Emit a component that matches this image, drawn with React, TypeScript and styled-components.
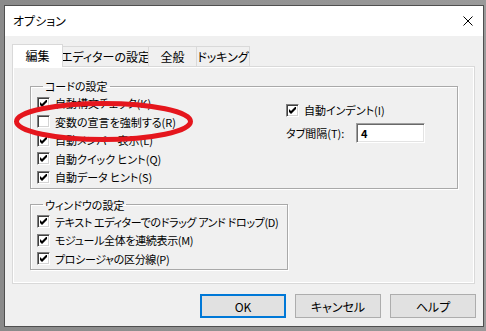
import styled, { createGlobalStyle } from 'styled-components';

const GlobalStyle = createGlobalStyle`
  html, body {
    margin: 0;
    padding: 0;
    background: #969696;
  }
  * {
    box-sizing: border-box;
  }
`

const CheckMark = () => (
  <svg width="7" height="7" viewBox="0 0 7 7">
    <polygon points="0,2 2,4 7,-1 7,2 2,7 0,5" fill="#000" />
  </svg>
)

type Item = { label: string; checked: boolean }

const codeItems: Item[] = [
  { label: '自動構文チェック(K)', checked: true },
  { label: '変数の宣言を強制する(R)', checked: false },
  { label: '自動メンバー表示(L)', checked: true },
  { label: '自動クイック ヒント(Q)', checked: true },
  { label: '自動データ ヒント(S)', checked: true },
]

const windowItems: Item[] = [
  { label: 'テキスト エディターでのドラッグ アンド ドロップ(D)', checked: true },
  { label: 'モジュール全体を連続表示(M)', checked: true },
  { label: 'プロシージャの区分線(P)', checked: true },
]

const tabs = [
  { label: '編集', width: 51 },
  { label: 'エディターの設定', width: 87 },
  { label: '全般', width: 49 },
  { label: 'ドッキング', width: 54 },
]

function CheckRow({ label, checked, tight }: Item & { tight?: boolean }) {
  return (
    <Row>
      <Box>{checked && <CheckMark />}</Box>
      <RowText $tight={tight}>{label}</RowText>
    </Row>
  )
}

function App() {
  return (
    <Page>
      <GlobalStyle />
      <Window>
        <TitleBar>
          <Title>オプション</Title>
          <CloseButton>
            <svg width="10" height="10" viewBox="0 0 10 10">
              <path d="M0.5 0.5 L9.5 9.5 M9.5 0.5 L0.5 9.5" stroke="#000" strokeWidth="1" />
            </svg>
          </CloseButton>
        </TitleBar>

        <Body>
          <TabStrip>
            {tabs.map((t, i) => (
              <Tab key={t.label} $active={i === 0} $width={t.width}>{t.label}</Tab>
            ))}
          </TabStrip>

          <Panel>
            <Group>
              <Legend>コードの設定</Legend>
              <CodeGrid>
                <Column>
                  {codeItems.map(item => <CheckRow key={item.label} {...item} />)}
                </Column>
                <SideColumn>
                  <Row>
                    <Box><CheckMark /></Box>
                    <RowText>自動インデント(I)</RowText>
                  </Row>
                  <FieldRow>
                    <FieldLabel>タブ間隔(T):</FieldLabel>
                    <TextInput>4</TextInput>
                  </FieldRow>
                </SideColumn>
              </CodeGrid>
            </Group>

            <Group $width={258}>
              <Legend>ウィンドウの設定</Legend>
              <Column>
                {windowItems.map(item => <CheckRow key={item.label} {...item} tight />)}
              </Column>
            </Group>
          </Panel>

          <ButtonRow>
            <Button $default>OK</Button>
            <Button>キャンセル</Button>
            <Button>ヘルプ</Button>
          </ButtonRow>
        </Body>
      </Window>

      <Annotation width="486" height="331" viewBox="0 0 486 331">
        <ellipse cx="103.5" cy="121.5" rx="87" ry="18" fill="none" stroke="#e5161d" strokeWidth="5" />
      </Annotation>
    </Page>
  )
}

const Page = styled.div`
  position: relative;
  width: 486px;
  height: 331px;
  padding: 5px 2px 4px 4px;
  background: linear-gradient(90deg, #8a8a8a, #9a9a9a);
  font-family: "Noto Sans CJK JP", "Noto Sans", sans-serif;
  color: #000;
`

const Window = styled.div`
  width: 480px;
  height: 322px;
  border: 1px solid #4f4f4f;
  display: flex;
  flex-direction: column;
  background: #f0f0f0;
`

const TitleBar = styled.div`
  height: 30px;
  background: #fff;
  display: flex;
  align-items: center;
  justify-content: space-between;
  padding-left: 8px;
`

const Title = styled.span`
  font-size: 12px;
  font-feature-settings: "palt";
  line-height: 16px;
`

const CloseButton = styled.div`
  width: 30px;
  height: 30px;
  display: flex;
  align-items: center;
  justify-content: center;
  padding-bottom: 1px;
`

const Body = styled.div`
  flex: 1;
  padding: 8px 7px 0 7px;
  display: flex;
  flex-direction: column;
`

const TabStrip = styled.div`
  height: 22px;
  display: flex;
  align-items: flex-end;
`

const Tab = styled.div<{ $active?: boolean; $width: number }>`
  position: relative;
  width: ${p => p.$width}px;
  height: ${p => (p.$active ? 23 : 20)}px;
  margin-bottom: ${p => (p.$active ? -1 : 0)}px;
  margin-left: -1px;
  z-index: ${p => (p.$active ? 1 : 0)};
  border: 1px solid #d9d9d9;
  border-bottom: none;
  background: ${p => (p.$active ? '#fff' : '#f0f0f0')};
  display: flex;
  align-items: center;
  justify-content: center;
  padding-bottom: ${p => (p.$active ? 1 : 0)}px;
  font-size: 12px;
  font-feature-settings: "palt";
  white-space: nowrap;

  &:first-child {
    margin-left: 0;
  }
`

const Panel = styled.div`
  width: 463px;
  height: 218px;
  border: 1px solid #d9d9d9;
  background: #f0f0f0;
  box-shadow: inset 0 0 0 1px #fff;
  padding: 12px 0 0 17px;
  display: flex;
  flex-direction: column;
  gap: 9px;
`

const Group = styled.fieldset<{ $width?: number }>`
  width: ${p => p.$width ?? 428}px;
  margin: 0;
  padding: 1px 6px 1px 6px;
  min-width: 0;
  border: 1px solid #a9a9a9;
  box-shadow: 1px 1px 0 #fff, inset 1px 1px 0 #fff;
`

const Legend = styled.legend`
  margin-left: 6px;
  padding: 0 2px;
  font-size: 11px;
  font-feature-settings: "palt";
  line-height: 14px;
`

const CodeGrid = styled.div`
  display: grid;
  grid-template-columns: 249px 1fr;
`

const Column = styled.div`
  display: flex;
  flex-direction: column;
`

const SideColumn = styled.div`
  display: flex;
  flex-direction: column;
  padding-top: 7px;
  gap: 3px;
`

const Row = styled.div`
  height: 18.5px;
  display: flex;
  align-items: center;
  gap: 5px;
  white-space: nowrap;
`

const Box = styled.span`
  width: 13px;
  height: 13px;
  flex: none;
  background: #fff;
  border: 1px solid;
  border-color: #808080 #fff #fff #808080;
  box-shadow: inset 1px 1px 0 #404040, inset -1px -1px 0 #d4d4d4;
  display: flex;
  align-items: center;
  justify-content: center;
`

const RowText = styled.span<{ $tight?: boolean }>`
  font-size: 11px;
  font-feature-settings: "palt";
  line-height: 14px;
  letter-spacing: ${p => (p.$tight ? '-0.35px' : '0')};
`

const FieldRow = styled.div`
  display: flex;
  align-items: center;
  height: 20px;
`

const FieldLabel = styled.span`
  width: 70px;
  font-size: 11px;
  font-feature-settings: "palt";
  line-height: 14px;
`

const TextInput = styled.div`
  width: 69px;
  height: 20px;
  background: #fff;
  border: 1px solid;
  border-color: #a0a0a0 #fff #fff #a0a0a0;
  box-shadow: inset 1px 1px 0 #696969, inset -1px -1px 0 #e3e3e3;
  padding: 2px 0 0 4px;
  font-size: 11px;
  font-weight: bold;
  line-height: 14px;
`

const ButtonRow = styled.div`
  margin-top: 10px;
  display: flex;
  justify-content: flex-end;
  gap: 9px;
`

const Button = styled.div<{ $default?: boolean }>`
  width: 86px;
  height: 24px;
  background: #e1e1e1;
  border: ${p => (p.$default ? '2px solid #0078d7' : '1px solid #adadad')};
  display: flex;
  align-items: center;
  justify-content: center;
  font-size: 12px;
  font-feature-settings: "palt";
`

const Annotation = styled.svg`
  position: absolute;
  top: 0;
  left: 0;
  pointer-events: none;
`

export default App
